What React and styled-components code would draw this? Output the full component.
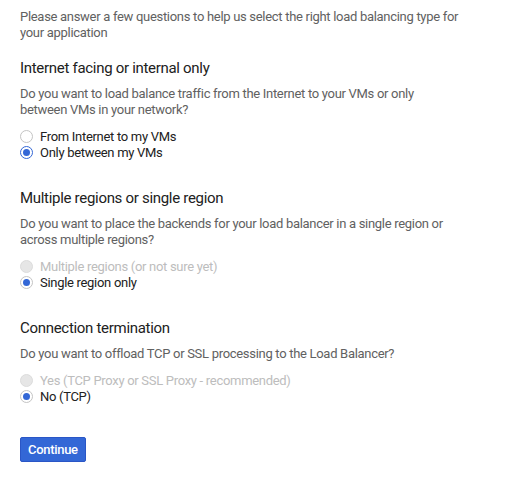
import React, { useState } from "react";
import styled, { createGlobalStyle, css } from "styled-components";

const GlobalStyle = createGlobalStyle`
  html, body {
    margin: 0;
    padding: 0;
    background: #ffffff;
  }
  body {
    font-family: Roboto, "Liberation Sans", Arial, sans-serif;
    letter-spacing: -0.3px;
    -webkit-font-smoothing: antialiased;
  }
`;

const Page = styled.div`
  width: 440px;
  padding: 9px 20px 20px;
`;

const Intro = styled.p`
  margin: 0;
  font-size: 13px;
  line-height: 16px;
  color: #616161;
`;

const Section = styled.section`
  margin-top: 17px;
  & + & {
    margin-top: 27px;
  }
`;

const Title = styled.h3`
  margin: 0;
  font-size: 15px;
  font-weight: 400;
  line-height: 20px;
  color: #212121;
`;

const Question = styled.p`
  margin: 8px 0 0;
  font-size: 13px;
  line-height: 16px;
  color: #616161;
`;

const Options = styled.div`
  margin-top: 10px;
  display: flex;
  flex-direction: column;
`;

const Option = styled.label`
  display: flex;
  align-items: center;
  height: 16.5px;
  font-size: 13px;
  color: ${(p) => (p.$disabled ? "#bdbdbd" : "#212121")};
  cursor: ${(p) => (p.$disabled ? "default" : "pointer")};
`;

const Dot = styled.span`
  box-sizing: border-box;
  width: 13px;
  height: 13px;
  border-radius: 50%;
  margin-right: 7px;
  flex: none;
  position: relative;
  border: 1px solid #c4c4c4;
  background: #fff;
  ${(p) =>
    p.$disabled &&
    css`
      background: #e6e6e6;
      border-color: #dcdcdc;
    `}
  ${(p) =>
    p.$checked &&
    css`
      &::after {
        content: "";
        position: absolute;
        left: 2px;
        top: 2px;
        width: 7px;
        height: 7px;
        border-radius: 50%;
        background: #3367d6;
      }
    `}
  ${(p) =>
    p.$focused &&
    css`
      border: 1.5px solid #3367d6;
      &::after {
        left: 1.75px;
        top: 1.75px;
      }
    `}
`;

const Button = styled.button`
  margin-top: 32px;
  height: 25px;
  padding: 0 7px;
  border: 1px solid #2a56c6;
  border-radius: 2px;
  background: #3367d6;
  color: #fff;
  font-family: inherit;
  font-size: 13px;
  font-weight: 500;
  letter-spacing: -0.3px;
  cursor: pointer;
`;

const sections = [
  {
    key: "facing",
    title: "Internet facing or internal only",
    question:
      "Do you want to load balance traffic from the Internet to your VMs or only between VMs in your network?",
    options: [
      { label: "From Internet to my VMs" },
      { label: "Only between my VMs" },
    ],
    value: 1,
    focused: true,
  },
  {
    key: "regions",
    title: "Multiple regions or single region",
    question:
      "Do you want to place the backends for your load balancer in a single region or across multiple regions?",
    options: [
      { label: "Multiple regions (or not sure yet)", disabled: true },
      { label: "Single region only" },
    ],
    value: 1,
  },
  {
    key: "termination",
    title: "Connection termination",
    question: "Do you want to offload TCP or SSL processing to the Load Balancer?",
    options: [
      { label: "Yes (TCP Proxy or SSL Proxy - recommended)", disabled: true },
      { label: "No (TCP)" },
    ],
    value: 1,
  },
];

export default function App() {
  const [values, setValues] = useState(
    Object.fromEntries(sections.map((s) => [s.key, s.value]))
  );

  return (
    <Page>
      <GlobalStyle />
      <Intro>
        Please answer a few questions to help us select the right load balancing
        type for your application
      </Intro>
      {sections.map((s) => (
        <Section key={s.key}>
          <Title>{s.title}</Title>
          <Question>{s.question}</Question>
          <Options>
            {s.options.map((o, i) => {
              const checked = values[s.key] === i;
              return (
                <Option
                  key={o.label}
                  $disabled={o.disabled}
                  onClick={() =>
                    !o.disabled && setValues({ ...values, [s.key]: i })
                  }
                >
                  <Dot
                    $checked={checked}
                    $disabled={o.disabled}
                    $focused={checked && s.focused}
                  />
                  {o.label}
                </Option>
              );
            })}
          </Options>
        </Section>
      ))}
      <Button>Continue</Button>
    </Page>
  );
}
